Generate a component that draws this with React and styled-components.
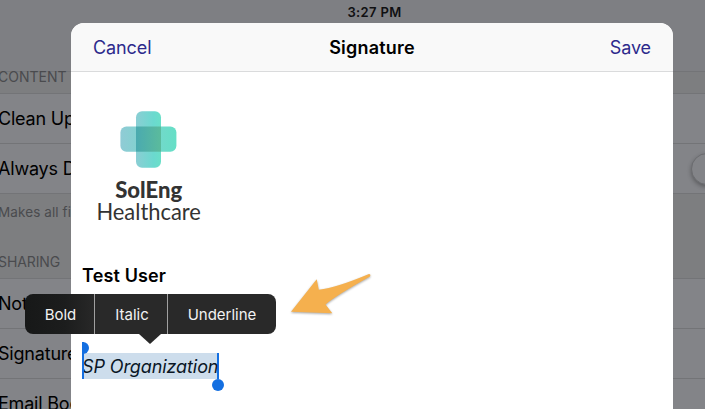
import React from 'react';
import styled, { createGlobalStyle } from 'styled-components';

const GlobalStyle = createGlobalStyle`
  * {
    box-sizing: border-box;
  }

  body {
    margin: 0;
    overflow: hidden;
    font-family: Inter, 'Liberation Sans', sans-serif;
    color: #000;
  }
`;

// Dimmed settings page
const Screen = styled.div`
  position: relative;
  width: 705px;
  height: 409px;
  overflow: hidden;
  background-color: #7d7e80;
`;

const StatusBar = styled.header`
  height: 72px;
  padding-left: 44px;
  background-color: #7e7f83;
  border-bottom: 1px solid #737477;
  color: #101012;
  font-size: 13px;
  font-weight: 600;
  line-height: 24px;
  letter-spacing: 0.35px;
  text-align: center;
`;

const SectionTitle = styled.h2`
  height: ${({ $height }) => $height}px;
  margin: 0 0 0 -2px;
  display: flex;
  align-items: flex-end;
  padding-bottom: 8px;
  color: #4a4b4e;
  font-size: 14px;
  font-weight: 400;
  line-height: 17px;
  letter-spacing: ${({ $spacing }) => $spacing}px;
`;

const List = styled.div`
  border-top: 1px solid #737477;
`;

const Row = styled.div`
  height: 50px;
  display: flex;
  align-items: center;
  justify-content: space-between;
  background-color: #838488;
  border-bottom: 1px solid #737477;
  font-size: 18px;
  white-space: nowrap;
  letter-spacing: -0.2px;
`;

const RowLabel = styled.span`
  margin-left: -2px;
`;

const SwitchKnob = styled.span`
  flex: none;
  width: 32px;
  height: 32px;
  margin-right: -18px;
  border: 1px solid #6b6c6f;
  border-radius: 50%;
  background-color: #838488;
  box-shadow: 0 2px 4px rgba(0, 0, 0, 0.3);
`;

const Hint = styled.p`
  height: 51px;
  margin: 0 0 0 -2px;
  padding-top: 9px;
  color: #4a4b4e;
  font-size: 13.5px;
  line-height: 18px;
  letter-spacing: 0.1px;
`;

// Signature dialog
const Dialog = styled.section`
  position: absolute;
  top: 23px;
  left: 71px;
  width: 602px;
  height: 400px;
  overflow: hidden;
  border-radius: 13px;
  background-color: #fff;
`;

const DialogHeader = styled.div`
  height: 49px;
  display: grid;
  grid-template-columns: 1fr auto 1fr;
  align-items: center;
  padding: 0 22px;
  background-color: #f9f9f9;
  border-bottom: 1px solid #dadbdc;
`;

const DialogTitle = styled.h1`
  margin: 0;
  font-size: 18px;
  font-weight: 600;
  letter-spacing: 0.2px;
`;

const HeaderButton = styled.button`
  justify-self: ${({ $align }) => $align};
  padding: 0;
  border: none;
  background: none;
  color: #2d2a8c;
  font-family: inherit;
  font-size: 18px;
  letter-spacing: -0.1px;
`;

const SignatureBody = styled.div`
  display: flex;
  flex-direction: column;
  align-items: flex-start;
  padding: 32px 11px 0;
`;

const Logo = styled.svg`
  display: block;
  margin-left: 8px;
`;

const UserName = styled.div`
  margin-top: 33px;
  font-size: 18px;
  font-weight: 600;
  line-height: 26px;
  letter-spacing: 0.15px;
`;

const Selection = styled.div`
  position: relative;
  height: 26px;
  margin-top: 64px;
  width: 137px;
  background-color: #cdddec;
  border-right: 2px solid #146fe1;
  color: #0a1626;
  font-size: 18px;
  font-style: italic;
  line-height: 27px;
  letter-spacing: -0.1px;
  white-space: nowrap;
`;

const StartHandle = styled.span`
  position: absolute;
  left: 0;
  bottom: 0;
  width: 2px;
  height: 37px;
  background-color: #146fe1;

  &::before {
    content: '';
    position: absolute;
    top: 0;
    left: 0;
    width: 7px;
    height: 12px;
    border-radius: 0 6px 6px 0;
    background-color: #146fe1;
  }
`;

const EndHandle = styled.span`
  position: absolute;
  right: -7px;
  top: 26px;
  width: 12px;
  height: 12px;
  border-radius: 50%;
  background-color: #146fe1;
`;

// Formatting popover
const FormatMenu = styled.div`
  position: absolute;
  top: 294px;
  left: 25px;
  display: flex;
  height: 40px;
  border-radius: 8px;
  background: linear-gradient(90deg, #171818 0, #1c1d1d 40px, #292929 72px);

  &::after {
    content: '';
    position: absolute;
    top: 40px;
    left: 114px;
    border: solid transparent;
    border-width: 10px 11px 0;
    border-top-color: #292929;
  }
`;

const FormatButton = styled.button`
  width: ${({ $width }) => $width}px;
  padding: 0 0 0 ${({ $indent }) => $indent}px;
  border: none;
  background: none;
  color: #f2f2f2;
  font-family: inherit;
  font-size: 15px;

  & + & {
    border-left: 1px solid #a0a0a0;
  }
`;

const Pointer = styled.svg`
  position: absolute;
  top: 268px;
  left: 285px;
  filter: drop-shadow(0 1px 1px rgba(0, 0, 0, 0.35));
`;

const formats = [
  { label: 'Bold', width: 69, indent: 2 },
  { label: 'Italic', width: 73, indent: 2 },
  { label: 'Underline', width: 109, indent: 0 },
];

const CompanyLogo = () => (
  <Logo width="116" height="126" viewBox="0 0 116 126">
    <defs>
      <linearGradient id="horizontal">
        <stop offset="0" stopColor="#90cbd5" />
        <stop offset="1" stopColor="#65dfc6" />
      </linearGradient>
      <linearGradient id="vertical">
        <stop offset="0" stopColor="#8bced4" />
        <stop offset="0.7" stopColor="#6bd9cf" />
        <stop offset="1" stopColor="#6adfc8" />
      </linearGradient>
      <linearGradient id="overlap">
        <stop offset="0" stopColor="#4aaab0" />
        <stop offset="1" stopColor="#5bbb9c" />
      </linearGradient>
    </defs>
    <rect x="46" y="7.2" width="25" height="56.5" rx="6" fill="url(#vertical)" />
    <rect x="30.4" y="22.5" width="56" height="25.2" rx="6" fill="url(#horizontal)" />
    <rect x="46" y="22.5" width="25" height="25.2" fill="url(#overlap)" />
    <text x="25.2" y="93.5" textLength="67" lengthAdjust="spacingAndGlyphs" fill="#333" fontFamily="Lato, sans-serif" fontSize="22.5" fontWeight="900">
      SolEng
    </text>
    <text x="6.4" y="116" textLength="104.5" lengthAdjust="spacingAndGlyphs" fill="#333" fontFamily="Lato, sans-serif" fontSize="22.5">
      Healthcare
    </text>
  </Logo>
);

const App = () => {
  return (
    <>
      <GlobalStyle />
      <Screen>
        <StatusBar>3:27 PM</StatusBar>
        <SectionTitle $height={21} $spacing={0}>CONTENT</SectionTitle>
        <List>
          <Row>
            <RowLabel>Clean Up</RowLabel>
          </Row>
          <Row>
            <RowLabel>Always D</RowLabel>
            <SwitchKnob />
          </Row>
        </List>
        <Hint>Makes all fi</Hint>
        <SectionTitle $height={33} $spacing={-0.1}>SHARING</SectionTitle>
        <List>
          <Row>
            <RowLabel>Notes</RowLabel>
          </Row>
          <Row>
            <RowLabel>Signature</RowLabel>
          </Row>
          <Row>
            <RowLabel>Email Body</RowLabel>
          </Row>
        </List>

        <Dialog>
          <DialogHeader>
            <HeaderButton $align="start">Cancel</HeaderButton>
            <DialogTitle>Signature</DialogTitle>
            <HeaderButton $align="end">Save</HeaderButton>
          </DialogHeader>
          <SignatureBody>
            <CompanyLogo />
            <UserName>Test User</UserName>
            <Selection>
              SP Organization
              <StartHandle />
              <EndHandle />
            </Selection>
          </SignatureBody>
        </Dialog>

        <FormatMenu>
          {formats.map(({ label, width, indent }) => (
            <FormatButton key={label} $width={width} $indent={indent}>
              {label}
            </FormatButton>
          ))}
        </FormatMenu>

        <Pointer width="90" height="52" viewBox="285 268 90 52">
          <path
            d="M291 311.8 L316.7 279.2 L318.8 289.8 Q337 287.5 369 274 Q371 274 370 276.6 Q337 295 325.5 304.5 L332.3 313.3 Z"
            fill="#f5b04e"
          />
        </Pointer>
      </Screen>
    </>
  );
};

export default App;
